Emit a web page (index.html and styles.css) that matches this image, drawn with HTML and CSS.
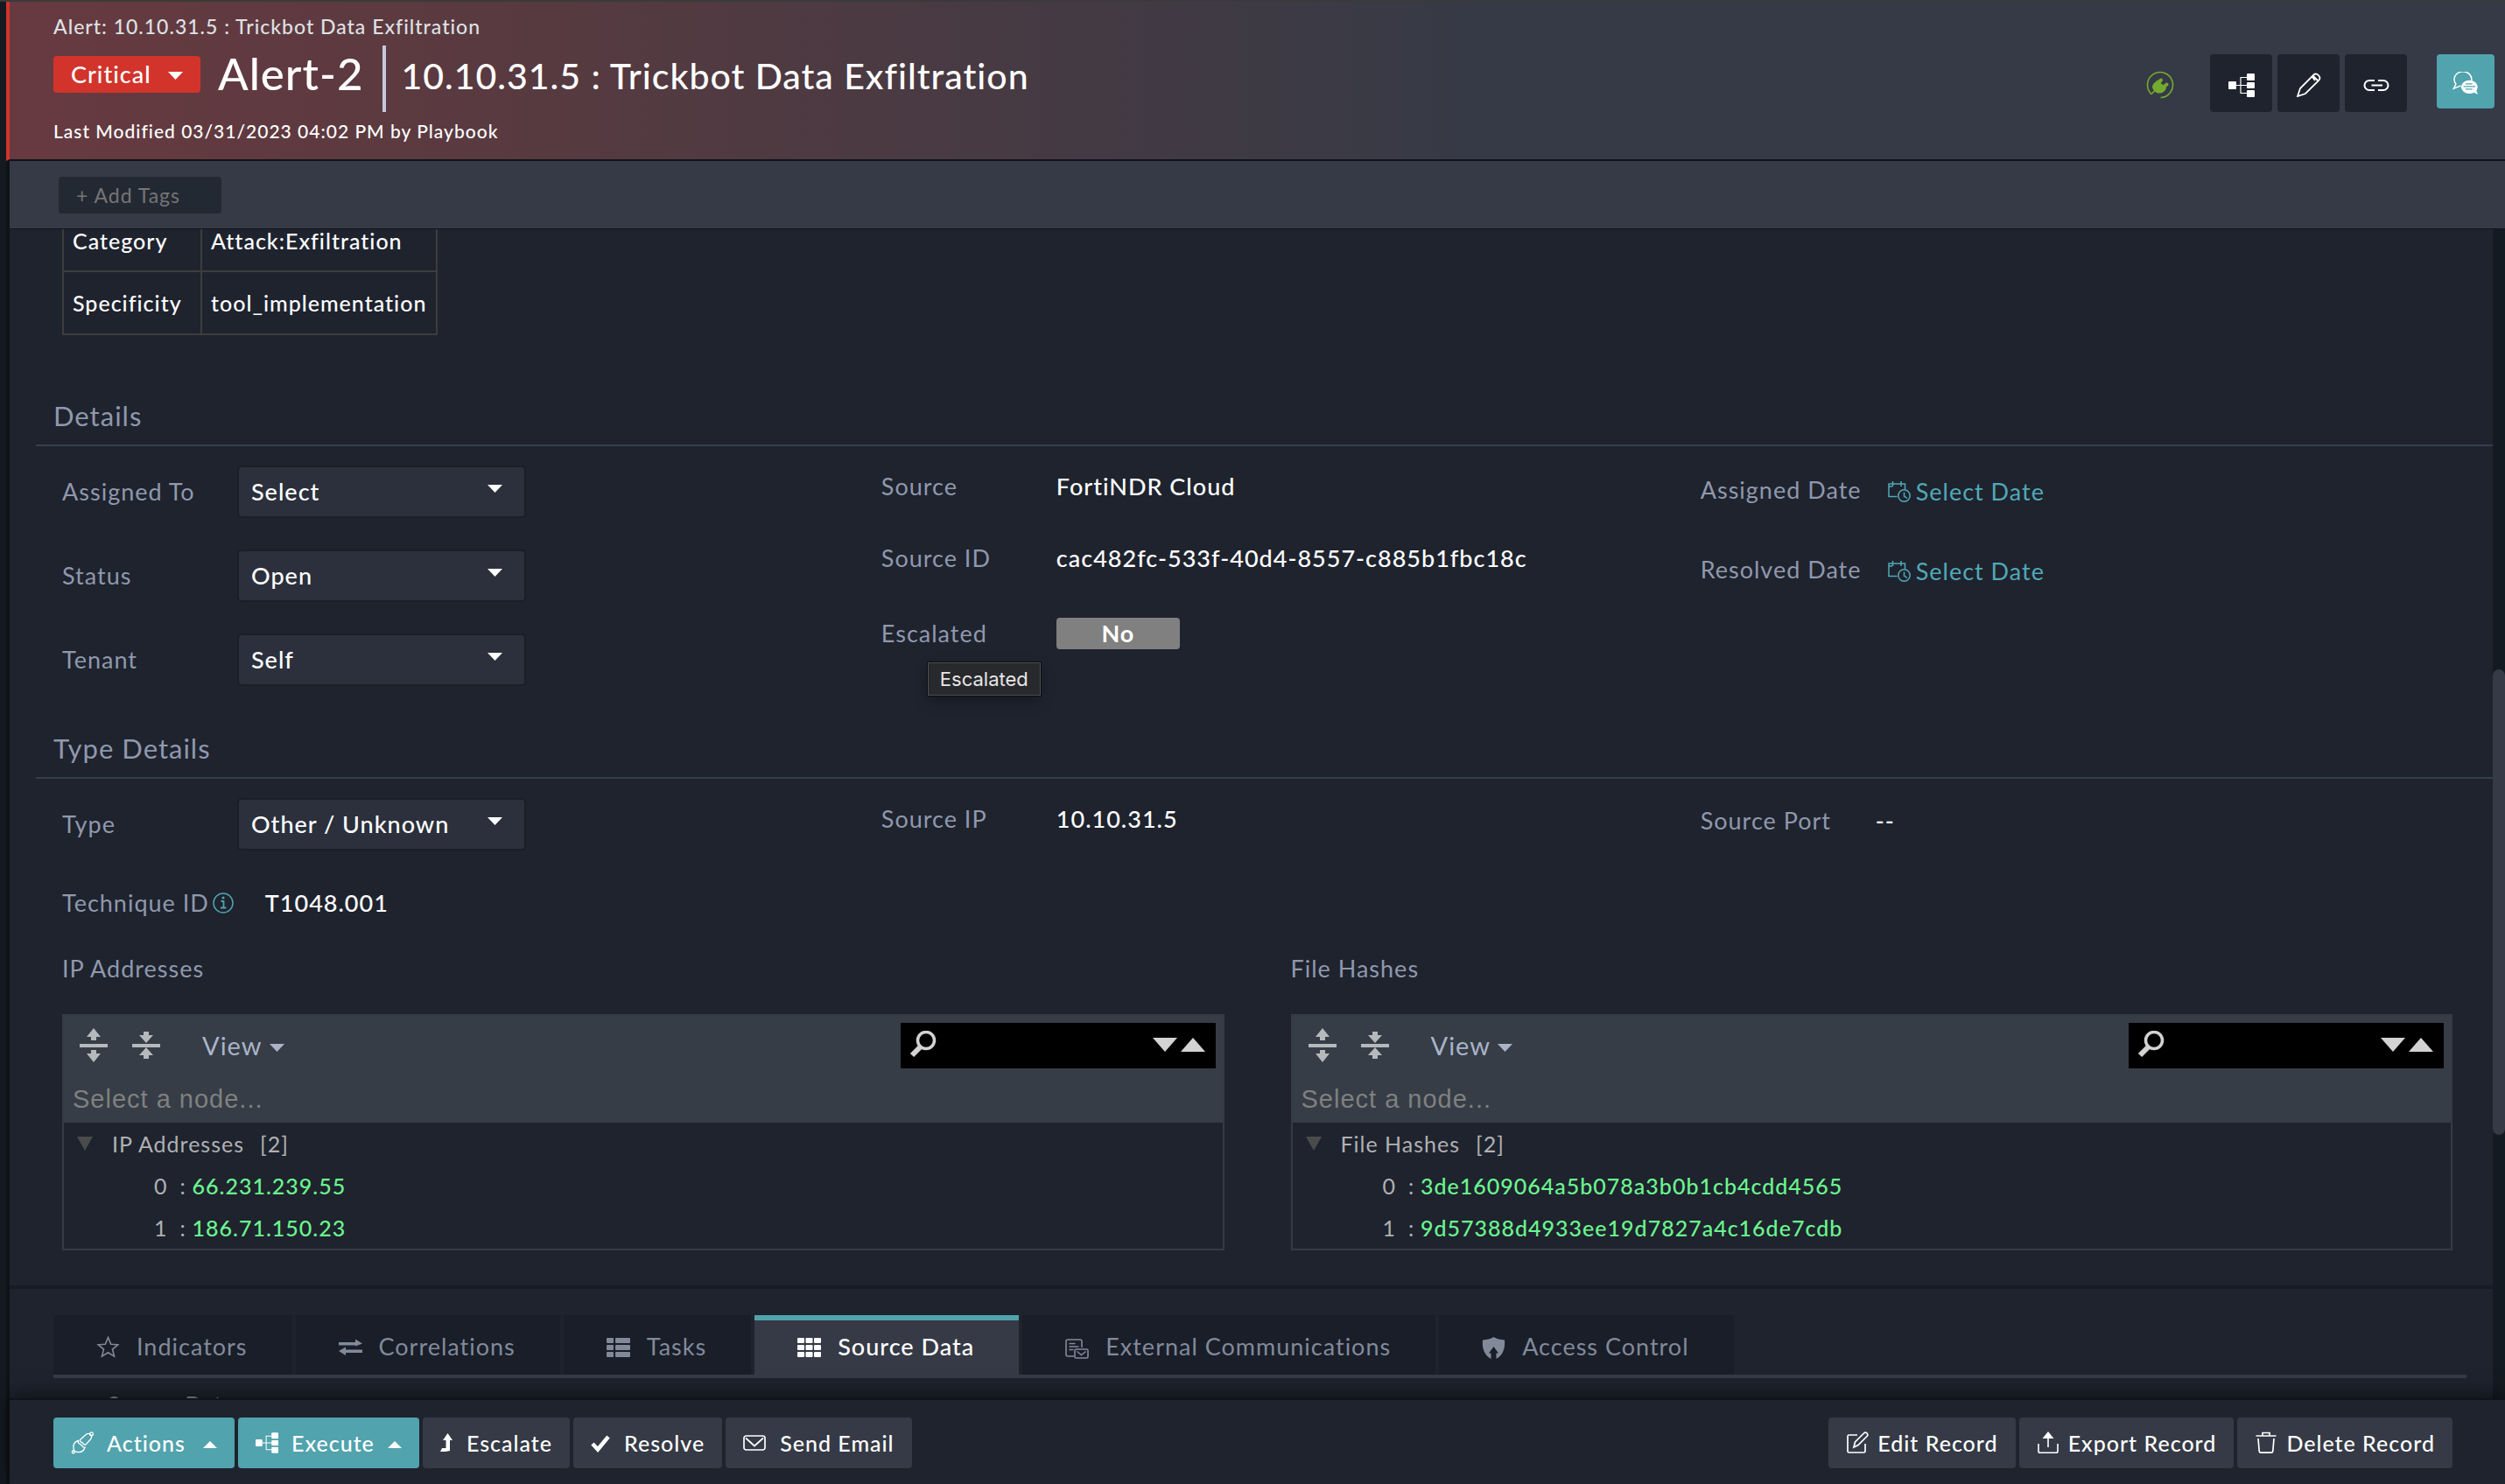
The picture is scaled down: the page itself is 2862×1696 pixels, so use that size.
FILE: index.html
```html
<!DOCTYPE html>
<html lang="en">
<head>
<meta charset="utf-8">
<title>Alert-2 | 10.10.31.5 : Trickbot Data Exfiltration</title>
<link rel="stylesheet" href="styles.css">
</head>
<body>
<svg class="sprite" aria-hidden="true">
  <symbol id="i-tree" viewBox="0 0 30 27"><g fill="currentColor"><rect y="9" width="9" height="9" rx="1"/><rect x="21" y="0" width="9" height="8" rx="1"/><rect x="21" y="10" width="9" height="7" rx="1"/><rect x="21" y="19" width="9" height="8" rx="1"/></g><path d="M9 13.5h12M21 4.5h-7v18h7" fill="none" stroke="currentColor" stroke-width="1.2"/></symbol>
  <symbol id="i-tri-up" viewBox="0 0 16 8" preserveAspectRatio="none"><path d="M0 8L8 0l8 8z" fill="currentColor"/></symbol>
  <symbol id="i-tri-down" viewBox="0 0 16 9" preserveAspectRatio="none"><path d="M0 0h16L8 9z" fill="currentColor"/></symbol>
  <symbol id="i-caldate" viewBox="0 0 26 24"><g fill="none" stroke="currentColor" stroke-width="1.5"><path d="M10.5 17.5H1V3h18.500v6M1 6h4M5.500 0v6M15 0v6"/><circle cx="18.500" cy="16.500" r="6.700"/><path d="M18.500 12.500v4.500l3.500 2.500"/></g></symbol>
  <symbol id="i-expand" viewBox="0 0 32 40"><path d="M0 18h32v4H0zM16 0l8 10h-5v4h-6v-4H8zM16 39l8-10h-5v-4h-6v4H8z" fill="currentColor"/></symbol>
  <symbol id="i-collapse" viewBox="0 0 32 40"><path d="M0 18h32v4H0zM16 17l8-9h-5V4h-6v4H8zM16 22l8 9h-5v4h-6v-4H8z" fill="currentColor"/></symbol>
  <symbol id="i-search" viewBox="0 0 32 32"><g fill="none" stroke="currentColor"><circle cx="20" cy="11" r="9.500" stroke-width="3.500"/><path d="M13 19L4 28" stroke-width="6"/></g></symbol>
</svg>

<div class="app">
  <header class="record-head">
    <div class="record-title">
      <p class="crumb">Alert: 10.10.31.5 : Trickbot Data Exfiltration</p>
      <div class="title-row">
        <div class="severity">
          <select aria-label="Severity"><option>Critical</option></select>
          <svg class="severity-caret"><use href="#i-tri-down"/></svg>
        </div>
        <span class="record-id">Alert-2</span>
        <h1>10.10.31.5 : Trickbot Data Exfiltration</h1>
      </div>
      <p class="modified">Last Modified 03/31/2023 04:02 PM by Playbook</p>
    </div>
    <div class="head-actions">
      <svg class="plug" viewBox="0 0 32 32"><path d="M16.500 30.500A14.500 14.500 0 1 0 6 26.500l4-4" fill="none" stroke="currentColor" stroke-width="1.600"/><path d="M8 15l5-4.500 10 9C21.500 24 18 26 14 25.500S7 21 7 18z" fill="currentColor"/><path d="M12.500 15l4.500-4.500M18 20l5.500-4.500" stroke="currentColor" stroke-width="4" stroke-linecap="round"/></svg>
      <div class="icon-buttons">
        <button type="button" aria-label="Visual correlations"><svg class="ic-30"><use href="#i-tree"/></svg></button>
        <button type="button" aria-label="Edit"><svg class="ic-28" viewBox="0 0 28 28"><path d="M1 27l3-9L19 2.800a4.400 4.400 0 0 1 6.200 6.200L10 24zM17.500 4.500l3.500 4.500M18.500 3.500l6 6" fill="none" stroke="currentColor" stroke-width="1.800"/></svg></button>
        <button type="button" aria-label="Copy link"><svg class="ic-30" viewBox="0 0 30 27"><path d="M13 8H7a5.500 5.500 0 0 0 0 11h6M17 8h6a5.500 5.500 0 0 1 0 11h-6M9.500 13.500h12.500" fill="none" stroke="currentColor" stroke-width="2"/></svg></button>
      </div>
      <button type="button" class="chat" aria-label="Collaboration"><svg class="ic-30" viewBox="0 0 30 28"><path d="M9.500 16.500L.8 20l2.700-5.500A10.300 9.300 0 1 1 22 10.500" fill="none" stroke="currentColor" stroke-width="1.500"/><ellipse cx="19.500" cy="18" rx="9.800" ry="7.800" fill="currentColor"/><path d="M22 23l7.500 4-2.500-7z" fill="currentColor"/><path d="M15 14.500h8M12.500 17.500h14M15 20.500h8" stroke="#51a3ad" stroke-width="1.300"/></svg></button>
    </div>
  </header>

  <div class="tagbar"><input type="text" placeholder="+ Add Tags" aria-label="Add tags"></div>

  <main class="scroller">
    <div class="content">
      <table class="facts">
        <tr><td>Category</td><td>Attack:Exfiltration</td></tr>
        <tr><td>Specificity</td><td>tool_implementation</td></tr>
      </table>

      <h2>Details</h2>
      <div class="fields">
        <div class="col col-select">
          <div class="field"><label for="assigned">Assigned To</label><div class="pick"><select id="assigned"><option>Select</option></select><svg><use href="#i-tri-down"/></svg></div></div>
          <div class="field"><label for="status">Status</label><div class="pick"><select id="status"><option>Open</option></select><svg><use href="#i-tri-down"/></svg></div></div>
          <div class="field"><label for="tenant">Tenant</label><div class="pick"><select id="tenant"><option>Self</option></select><svg><use href="#i-tri-down"/></svg></div></div>
        </div>
        <div class="col col-text">
          <div class="field"><span class="label">Source</span><span class="value">FortiNDR Cloud</span></div>
          <div class="field"><span class="label">Source ID</span><span class="value">cac482fc-533f-40d4-8557-c885b1fbc18c</span></div>
          <div class="field field-toggle"><label for="escalated">Escalated</label><button type="button" id="escalated" class="toggle">No</button><span class="tooltip" role="tooltip">Escalated</span></div>
        </div>
        <div class="col col-date">
          <div class="field"><span class="label">Assigned Date</span><a class="date" href="#"><svg><use href="#i-caldate"/></svg>Select Date</a></div>
          <div class="field"><span class="label">Resolved Date</span><a class="date" href="#"><svg><use href="#i-caldate"/></svg>Select Date</a></div>
        </div>
      </div>

      <h2>Type Details</h2>
      <div class="fields">
        <div class="col col-select">
          <div class="field"><label for="type">Type</label><div class="pick"><select id="type"><option>Other / Unknown</option></select><svg><use href="#i-tri-down"/></svg></div></div>
          <div class="field technique"><span class="label">Technique ID<svg viewBox="0 0 24 24"><circle cx="12" cy="12" r="11" fill="none" stroke="currentColor" stroke-width="1.500"/><path d="M9.500 10h3v7.500M9 17.500h6.500" fill="none" stroke="currentColor" stroke-width="1.800"/><circle cx="12" cy="6" r="1.600" fill="currentColor"/></svg></span><span class="value">T1048.001</span></div>
        </div>
        <div class="col col-text">
          <div class="field"><span class="label">Source IP</span><span class="value">10.10.31.5</span></div>
        </div>
        <div class="col col-date">
          <div class="field"><span class="label">Source Port</span><span class="value">--</span></div>
        </div>
      </div>

      <div class="editors">
        <section>
          <h3>IP Addresses</h3>
          <div class="editor">
            <div class="toolbar">
              <button type="button" aria-label="Expand all"><svg class="ic-fold"><use href="#i-expand"/></svg></button>
              <button type="button" aria-label="Collapse all"><svg class="ic-fold"><use href="#i-collapse"/></svg></button>
              <button type="button" class="view">View<svg><use href="#i-tri-down"/></svg></button>
              <div class="search"><svg class="ic-search"><use href="#i-search"/></svg><input type="text" aria-label="Search IP addresses"><svg class="ic-step"><use href="#i-tri-down"/></svg><svg class="ic-step"><use href="#i-tri-up"/></svg></div>
            </div>
            <div class="nodepath">Select a node...</div>
            <div class="tree">
              <div class="node"><svg><use href="#i-tri-down"/></svg>IP Addresses<span>[2]</span></div>
              <div class="leaf"><span class="idx">0</span><span class="colon">:</span><span class="str">66.231.239.55</span></div>
              <div class="leaf"><span class="idx">1</span><span class="colon">:</span><span class="str">186.71.150.23</span></div>
            </div>
          </div>
        </section>
        <section>
          <h3>File Hashes</h3>
          <div class="editor">
            <div class="toolbar">
              <button type="button" aria-label="Expand all"><svg class="ic-fold"><use href="#i-expand"/></svg></button>
              <button type="button" aria-label="Collapse all"><svg class="ic-fold"><use href="#i-collapse"/></svg></button>
              <button type="button" class="view">View<svg><use href="#i-tri-down"/></svg></button>
              <div class="search"><svg class="ic-search"><use href="#i-search"/></svg><input type="text" aria-label="Search file hashes"><svg class="ic-step"><use href="#i-tri-down"/></svg><svg class="ic-step"><use href="#i-tri-up"/></svg></div>
            </div>
            <div class="nodepath">Select a node...</div>
            <div class="tree">
              <div class="node"><svg><use href="#i-tri-down"/></svg>File Hashes<span>[2]</span></div>
              <div class="leaf"><span class="idx">0</span><span class="colon">:</span><span class="str">3de1609064a5b078a3b0b1cb4cdd4565</span></div>
              <div class="leaf"><span class="idx">1</span><span class="colon">:</span><span class="str">9d57388d4933ee19d7827a4c16de7cdb</span></div>
            </div>
          </div>
        </section>
      </div>

      <div class="tabs-wrap">
        <div class="tabs" role="tablist">
          <button type="button" role="tab"><svg viewBox="0 0 27 27"><path d="M13.500 2.500l3.200 7.700 8 .6-6.200 5.300 2 8-7-4.400-7 4.400 2-8-6.200-5.300 8-.6z" fill="none" stroke="currentColor" stroke-width="1.600"/></svg>Indicators</button>
          <button type="button" role="tab"><svg viewBox="0 0 27 27"><path d="M0 8h19V4.500L27 9.500l-8 3V11.500H0zM27 16.500H8V13.500L0 18l8 5v-3h19z" fill="currentColor"/></svg>Correlations</button>
          <button type="button" role="tab"><svg viewBox="0 0 27 27"><g fill="currentColor"><rect y="3" width="8" height="6" rx="1"/><rect x="10" y="3" width="17" height="6" rx="1"/><rect y="11" width="8" height="6" rx="1"/><rect x="10" y="11" width="17" height="6" rx="1"/><rect y="19" width="8" height="6" rx="1"/><rect x="10" y="19" width="17" height="6" rx="1"/></g></svg>Tasks</button>
          <button type="button" role="tab" aria-selected="true"><svg viewBox="0 0 27 27"><g fill="currentColor"><rect y="3" width="8" height="6" rx="1"/><rect x="9.500" y="3" width="8" height="6" rx="1"/><rect x="19" y="3" width="8" height="6" rx="1"/><rect y="11" width="8" height="6" rx="1"/><rect x="9.500" y="11" width="8" height="6" rx="1"/><rect x="19" y="11" width="8" height="6" rx="1"/><rect y="19" width="8" height="6" rx="1"/><rect x="9.500" y="19" width="8" height="6" rx="1"/><rect x="19" y="19" width="8" height="6" rx="1"/></g></svg>Source Data</button>
          <button type="button" role="tab"><svg viewBox="0 0 27 27"><g fill="none" stroke="currentColor" stroke-width="1.600"><path d="M10 24H3a2 2 0 0 1-2-2V7a2 2 0 0 1 2-2h14a2 2 0 0 1 2 2v7M4.500 9.500h7M4.500 13h11M4.500 16.500h5"/><rect x="11" y="16" width="15" height="10" rx="1.500"/><path d="M13.500 18.500l5 4 5-4"/></g></svg>External Communications</button>
          <button type="button" role="tab"><svg viewBox="0 0 27 27"><path d="M13.500 2c3.500 2.500 8 3 12.500 3.500C27 15 24 23 16.500 27V20.500h2.500L13.500 13 8 20.500h2.500V27C3 23 0 15 1 5.500 5.500 5 10 4.500 13.500 2z" fill="currentColor"/></svg>Access Control</button>
        </div>
        <p class="panel-title">Source Data</p>
      </div>
    </div>
    <div class="track"><div class="thumb"></div></div>
  </main>

  <footer class="actionbar">
    <button type="button" class="primary"><svg class="ic-26" viewBox="0 0 26 26"><g fill="none" stroke="currentColor" stroke-width="1.300"><path d="M10.500 9.500L16 4.500C18.500 2 21 2 22.500 3.500s1.500 4-1 6.500L17 15c-2 .5-3-.5-3.500-2-2-.5-3.500-1.500-3-3.500z"/><path d="M8.500 10.500c-4 1-6 4-5.500 8.500l1 3.500 3.500 1c4 .5 7.500-1.500 8.500-5.500-1.500.5-2.500 0-3-1.500l-3-2.500c-1.500-.5-2-2-1.500-3.500z"/><circle cx="23.500" cy="2.800" r="1.900"/><circle cx="2.800" cy="23.500" r="1.500"/></g></svg>Actions<svg class="caret"><use href="#i-tri-up"/></svg></button>
    <button type="button" class="primary"><svg class="ic-26"><use href="#i-tree"/></svg>Execute<svg class="caret"><use href="#i-tri-up"/></svg></button>
    <button type="button"><svg class="ic-14" viewBox="0 0 14 22"><path d="M0 21h6l5-1V8h3L8.500 0 3 8h3.500v9H2z" fill="currentColor"/></svg>Escalate</button>
    <button type="button"><svg class="ic-22" viewBox="0 0 22 22"><path d="M2 12l6 6.500L20 4" fill="none" stroke="currentColor" stroke-width="4.500"/></svg>Resolve</button>
    <button type="button"><svg class="ic-26" viewBox="0 0 26 26"><path d="M3.500 5h19a2.500 2.500 0 0 1 2.500 2.500v11a2.500 2.500 0 0 1-2.500 2.500h-19A2.500 2.500 0 0 1 1 18.500v-11A2.500 2.500 0 0 1 3.500 5zM3 7.500l10 9 10-9" fill="none" stroke="currentColor" stroke-width="1.700"/></svg>Send Email</button>
    <span class="spacer"></span>
    <button type="button" class="tight"><svg class="ic-26" viewBox="0 0 26 26"><path d="M13 4H3.500A1.500 1.500 0 0 0 2 5.500v17A1.500 1.500 0 0 0 3.500 24h17a1.500 1.500 0 0 0 1.500-1.500V14M9 18l1.500-6L20.500 2a2.300 2.300 0 0 1 3.500 3.500L14 15.500z" fill="none" stroke="currentColor" stroke-width="1.700"/></svg>Edit Record</button>
    <button type="button" class="tight"><svg class="ic-26" viewBox="0 0 26 26"><path d="M2 14v8.500A1.800 1.800 0 0 0 3.800 24.300h18.400a1.800 1.800 0 0 0 1.800-1.800V14M13 6v12" fill="none" stroke="currentColor" stroke-width="1.600"/><path d="M13 0l6.500 8h-13z" fill="currentColor"/></svg>Export Record</button>
    <button type="button" class="tight"><svg class="ic-26" viewBox="0 0 26 26"><path d="M1.500 5h23M9 5V1.500h8V5M4 8l1.200 14.500a2 2 0 0 0 2 1.700h11.600a2 2 0 0 0 2-1.700L22 8" fill="none" stroke="currentColor" stroke-width="1.700"/></svg>Delete Record</button>
  </footer>
</div>
</body>
</html>
```
FILE: styles.css
```css
* { box-sizing: border-box; margin: 0; padding: 0; }

:root {
  --bg: #1e232e;
  --bar: #353a46;
  --teal: #51a3ad;
  --label: #9098ac;
  --line: #353e4d;
}

body {
  padding-left: 7px;
  border-top: 2px solid #3a3a3a;
  background: #151a21;
  color: #fff;
  font: 400 27px/36px Lato, "Liberation Sans", sans-serif;
  letter-spacing: 1px;
  font-variant-ligatures: none;
}

button, input, select {
  border: 0;
  background: none;
  color: inherit;
  font: inherit;
  letter-spacing: inherit;
  appearance: none;
  outline: 0;
}

svg { display: block; flex: none; }
.sprite { position: absolute; width: 0; height: 0; }

.app {
  display: flex;
  flex-direction: column;
  height: calc(100vh - 2px);
  border-left: 4px solid #0f1217;
  background: var(--bg);
}

/* record header */
.record-head {
  display: flex;
  justify-content: space-between;
  margin-left: -4px;
  padding: 10px 12px 14px 50px;
  border-left: 4px solid #d2342c;
  border-bottom: 2px solid #10131a;
  background: linear-gradient(to right, #673a40, #573a40 21%, #353a46 60%);
}
.record-title { display: flex; flex-direction: column; gap: 4px; }
.crumb { font-size: 23px; font-weight: 500; color: #dfe0e4; }
.modified { font-size: 21px; font-weight: 500; }
.title-row { display: flex; height: 76px; }
.severity { position: relative; align-self: flex-start; margin-top: 12px; }
.severity select {
  display: block;
  width: 168px;
  height: 42px;
  padding-left: 20px;
  border-radius: 4px;
  background: #d2342c;
  font-weight: 500;
}
.severity-caret { position: absolute; right: 20px; top: 18px; width: 17px; height: 9px; }
.record-id { margin: 0 21px 0 20px; font-size: 51px; line-height: 64px; font-weight: 500; }
h1 {
  padding-left: 18px;
  border-left: 4px solid #c5c8dc;
  font-size: 41px;
  line-height: 70px;
  font-weight: 500;
}

.head-actions { display: flex; align-items: flex-start; margin-top: 50px; }
.plug { width: 32px; height: 32px; margin: 19px 41px 0 0; color: #74ab30; }
.icon-buttons { display: flex; gap: 6px; margin-right: 34px; }
.head-actions button { display: grid; place-items: center; padding-top: 4px; border-radius: 4px; }
.icon-buttons button { width: 71px; height: 66px; background: var(--bg); }
.head-actions .chat { width: 66px; height: 62px; background: var(--teal); }
.ic-30 { width: 30px; height: 27px; }
.ic-28 { width: 28px; height: 28px; }

.tagbar {
  padding: 18px 56px 17px;
  border-bottom: 1px solid #10131a;
  background: var(--bar);
}
.tagbar input {
  display: block;
  width: 186px;
  height: 42px;
  padding: 0 20px;
  border-radius: 4px;
  background: #232933;
  font-size: 23px;
}
.tagbar input::placeholder { color: #757575; }

/* scrolling record body */
.scroller { flex: 1; min-height: 0; display: flex; overflow: hidden; }
.content { flex: 1; min-width: 0; }
.track { width: 14px; background: #141a21; }
.thumb { width: 14px; height: 532px; margin-top: 503px; border-radius: 7px; background: #353a46; }

.facts {
  margin-left: 60px;
  border-left: 2px solid #3d3d3d;
  border-spacing: 0;
  font-size: 25px;
  line-height: 26px;
  font-weight: 500;
}
.facts td { padding: 22px 10px; border: solid #3d3d3d; border-width: 0 2px 2px 0; }
.facts td:first-child { width: 158px; }
.facts td:last-child { width: 269px; }
.facts tr:first-child td { padding-top: 0; padding-bottom: 21px; }

h2 {
  margin: 49px 0 0 30px;
  padding: 0 20px 9px;
  border-bottom: 2px solid var(--line);
  color: var(--label);
  font-size: 31px;
  line-height: 48px;
  font-weight: 400;
}
.facts + h2 { margin-top: 68px; }

.fields { display: grid; grid-template-columns: 337fr 337fr 326fr; padding-left: 60px; }
.col { display: flex; flex-direction: column; }
.col-select { gap: 40px; padding-top: 24px; }
.col-text { gap: 46px; padding-top: 28px; }
.col-date { gap: 51px; padding-top: 30px; }
.field { position: relative; display: flex; align-items: center; min-height: 36px; font-weight: 500; }
.field label, .field .label { min-width: 200px; color: var(--label); font-weight: 400; }
.col-select label { min-width: 202px; }
.field-toggle { min-height: 44px; }
.pick { position: relative; }
.pick select {
  display: block;
  width: 326px;
  height: 56px;
  padding: 0 14px;
  border-radius: 3px;
  background: #2b303c;
  box-shadow: 0 0 0 2px #1a1e27;
}
.pick svg { position: absolute; right: 25px; top: 20px; width: 17px; height: 9px; }
.toggle { width: 141px; height: 36px; border-radius: 4px; background: #808080; line-height: 36px; font-weight: 700; }
.tooltip {
  position: absolute;
  left: 53px;
  top: 55px;
  padding: 0 13px;
  border: 1px solid #4d4e50;
  background: #28292d;
  box-shadow: 0 0 0 1px #0c0d10, 0 6px 16px rgba(0, 0, 0, .3);
  color: #e6e6e6;
  font: 400 22px/36px Inter, sans-serif;
  letter-spacing: 0;
}
.date { display: flex; align-items: center; gap: 6px; padding: 4px 0 0 14px; color: #52a9b6; font-weight: 400; text-decoration: none; }
.date svg { width: 26px; height: 24px; }
.technique { min-height: 44px; }
.technique .label { display: flex; align-items: center; gap: 4px; min-width: 0; margin-right: 36px; }
.technique .label svg { width: 24px; height: 24px; color: var(--teal); }

/* json editors */
.editors { display: grid; grid-template-columns: 1fr 1fr; gap: 76px; padding: 35px 46px 40px 60px; }
h3 { margin-bottom: 34px; color: var(--label); font-size: 27px; line-height: 36px; font-weight: 400; }
.editor { border: 2px solid #353a45; }
.toolbar { display: flex; align-items: center; height: 68px; padding: 0 8px 0 18px; background: #363d46; color: #b6b9bb; }
.ic-fold { width: 32px; height: 40px; }
.toolbar button + button { margin-left: 28px; }
.toolbar .view { display: flex; align-items: center; gap: 8px; margin-left: 48px; color: #a9b4c9; font-size: 29px; }
.view svg { width: 17px; height: 9px; margin-top: 4px; }
.search { display: flex; align-items: center; width: 360px; height: 52px; margin-left: auto; padding: 0 12px 2px 9px; background: #000; color: #d3d3d3; }
.search input { flex: 1; min-width: 0; }
.ic-search { width: 32px; height: 32px; }
.ic-step { width: 28px; height: 16px; margin-left: 4px; }
.nodepath { height: 54px; padding-left: 10px; background: #363d46; color: #808080; font: 29px/54px "Liberation Sans", sans-serif; }
.tree { color: #b0b1b3; font-size: 25px; line-height: 48px; }
.node { display: flex; align-items: center; padding-left: 15px; }
.node svg { width: 18px; height: 16px; margin-right: 22px; color: #4a4b4b; }
.node span { margin-left: 18px; }
.leaf { display: flex; padding-left: 103px; }
.colon { width: 14px; margin-left: 14px; }
.str { color: #6cf68f; font-weight: 500; }

/* tabs */
.tabs-wrap { padding: 30px 30px 0 50px; border-top: 4px solid #171c23; }
.tabs { display: flex; gap: 4px; border-bottom: 4px solid var(--bar); }
.tabs button {
  display: flex;
  align-items: center;
  gap: 19px;
  height: 68px;
  padding: 0 51px 2px 49px;
  border-top: 6px solid transparent;
  background: #191e29 border-box;
  color: #828a9a;
}
.tabs button svg { width: 27px; height: 27px; }
.tabs button[aria-selected] { border-top-color: var(--teal); background: var(--bar) padding-box; color: #fff; font-weight: 500; }
.panel-title { padding: 11px 0 0 62px; color: var(--label); font-size: 25px; }

/* bottom bar */
.actionbar {
  position: relative;
  display: flex;
  gap: 4px;
  padding: 20px 60px 18px 50px;
  border-top: 2px solid #10131a;
  background: var(--bg);
  box-shadow: 0 -4px 20px rgba(0, 0, 0, .55);
}
.actionbar button {
  display: flex;
  align-items: center;
  gap: 16px;
  height: 58px;
  padding: 0 20px;
  border-radius: 4px;
  background: var(--bar);
  font-size: 25px;
  font-weight: 500;
}
.actionbar .primary { width: 207px; gap: 15px; background: var(--teal); }
.actionbar .tight { gap: 10px; }
.spacer { flex: 1; }
.caret { width: 16px; height: 8px; margin: 4px 0 0 auto; }
.ic-26 { width: 26px; height: 26px; }
.ic-22 { width: 22px; height: 22px; }
.ic-14 { width: 14px; height: 22px; }
```
